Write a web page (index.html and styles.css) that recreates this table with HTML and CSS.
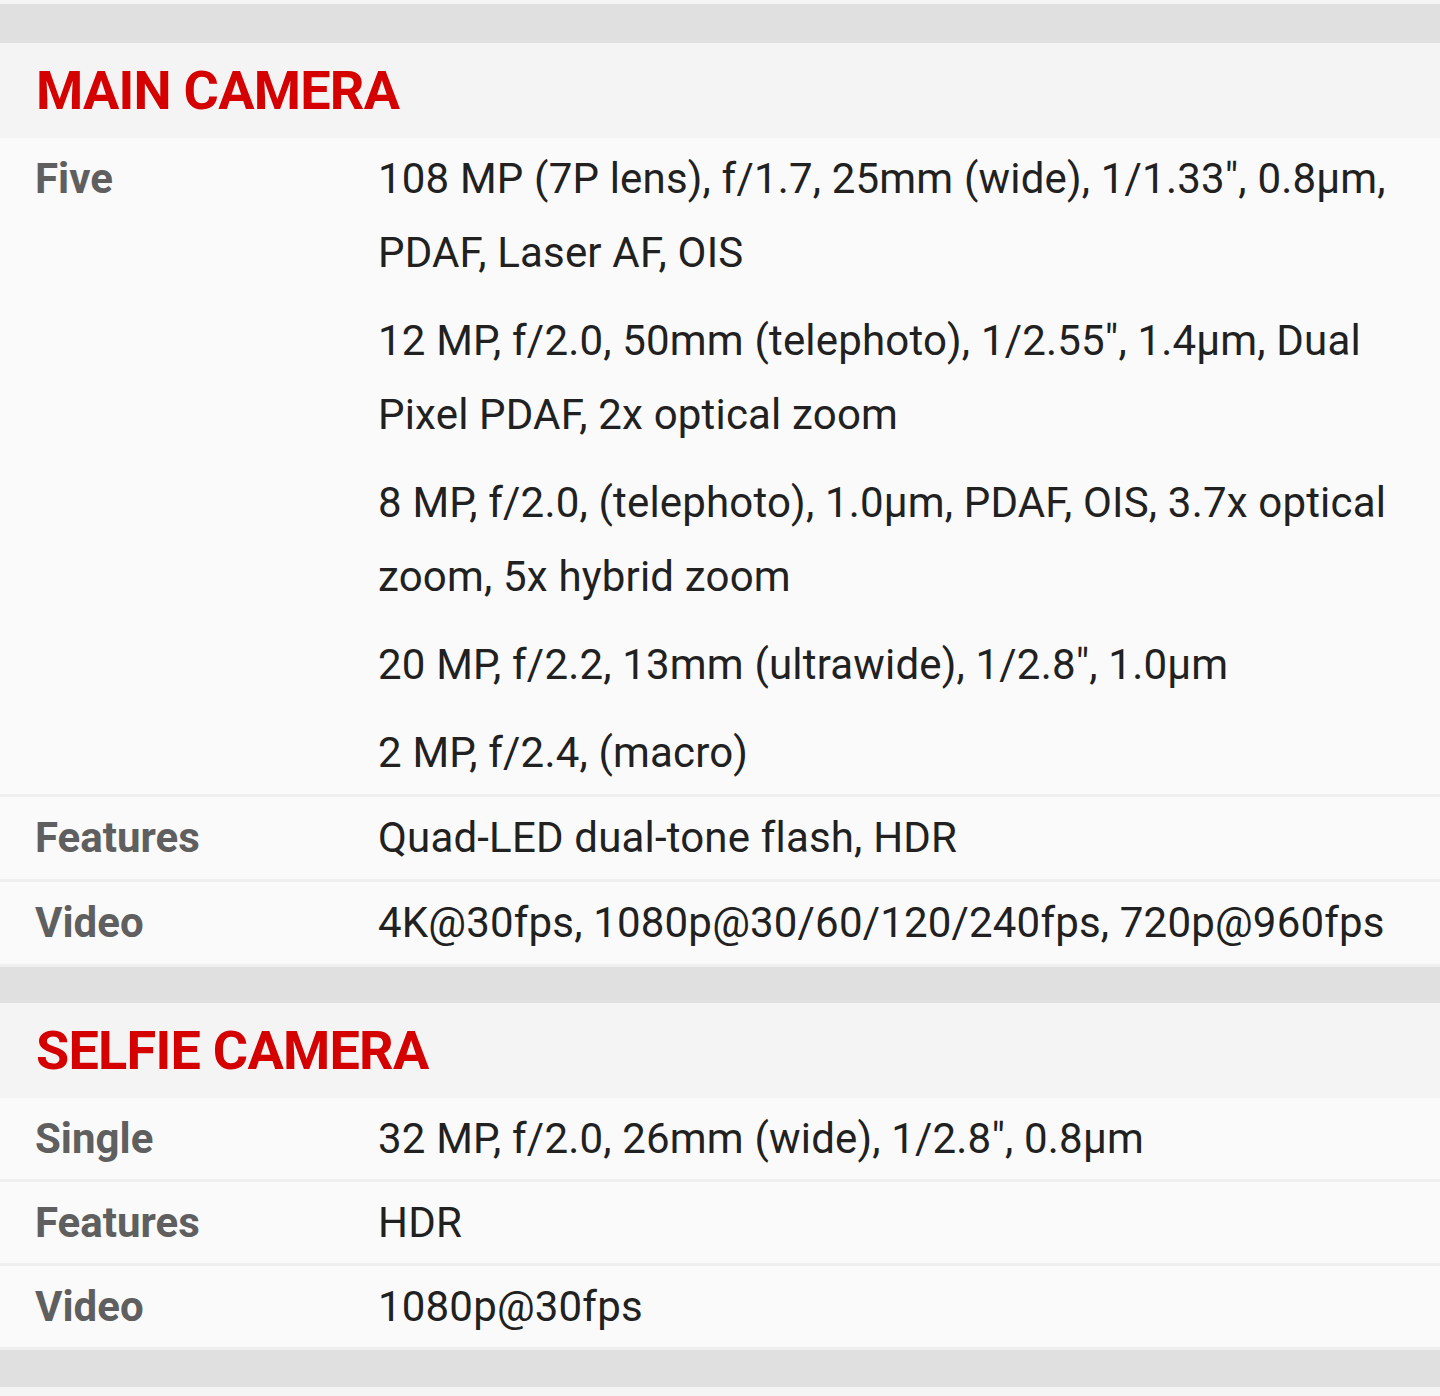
FILE: index.html
```html
<!DOCTYPE html>
<html>
<head>
<meta charset="utf-8">
<link rel="stylesheet" href="styles.css">
</head>
<body>
<div class="page">
  <div class="gap gap-top"></div>
  <section class="spec">
    <h2 class="spec-title">MAIN CAMERA</h2>
    <div class="row">
      <div class="label">Five</div>
      <div class="value">
        <p>108 MP (7P lens), f/1.7, 25mm (wide), 1/1.33", 0.8µm, PDAF, Laser AF, OIS</p>
        <p>12 MP, f/2.0, 50mm (telephoto), 1/2.55", 1.4µm, Dual Pixel PDAF, 2x optical zoom</p>
        <p>8 MP, f/2.0, (telephoto), 1.0µm, PDAF, OIS, 3.7x optical zoom, 5x hybrid zoom</p>
        <p>20 MP, f/2.2, 13mm (ultrawide), 1/2.8", 1.0µm</p>
        <p>2 MP, f/2.4, (macro)</p>
      </div>
    </div>
    <div class="row">
      <div class="label">Features</div>
      <div class="value"><p>Quad-LED dual-tone flash, HDR</p></div>
    </div>
    <div class="row">
      <div class="label">Video</div>
      <div class="value"><p>4K@30fps, 1080p@30/60/120/240fps, 720p@960fps</p></div>
    </div>
  </section>
  <div class="gap gap-mid"></div>
  <section class="spec">
    <h2 class="spec-title">SELFIE CAMERA</h2>
    <div class="row row-tight">
      <div class="label">Single</div>
      <div class="value"><p>32 MP, f/2.0, 26mm (wide), 1/2.8", 0.8µm</p></div>
    </div>
    <div class="row row-tight">
      <div class="label">Features</div>
      <div class="value"><p>HDR</p></div>
    </div>
    <div class="row row-tight">
      <div class="label">Video</div>
      <div class="value"><p>1080p@30fps</p></div>
    </div>
  </section>
  <div class="gap"></div>
</div>
</body>
</html>
```
FILE: styles.css
```css
html, body {
  margin: 0;
  padding: 0;
  background: #f5f5f5;
}
.page {
  font-family: Roboto, "Liberation Sans", sans-serif;
  padding-top: 4px;
  padding-bottom: 6px;
}
.gap {
  height: 37px;
  background: #e0e0e0;
}
.gap-top {
  height: 39px;
}
.gap-mid {
  height: 36px;
}
.spec {
  background: #fafafa;
}
.spec-title {
  margin: 0;
  height: 95px;
  display: flex;
  align-items: center;
  padding: 0 36px;
  background: #f4f4f4;
  color: #d50000;
  font-size: 54px;
  font-weight: 700;
  letter-spacing: -0.75px;
}
.row {
  display: flex;
  padding: 4px 24px 4px 35px;
  border-bottom: 3px solid #efefef;
  background: #fafafa;
}
.row-tight {
  padding-bottom: 3px;
}
.label {
  width: 343px;
  flex: none;
  font-size: 42px;
  line-height: 74px;
  font-weight: 700;
  color: #5f5f5f;
}
.value {
  flex: 1;
  display: flex;
  flex-direction: column;
  gap: 14px;
  font-size: 42px;
  line-height: 74px;
  letter-spacing: 0.18px;
  color: #212121;
}
.value p {
  margin: 0;
}
```
